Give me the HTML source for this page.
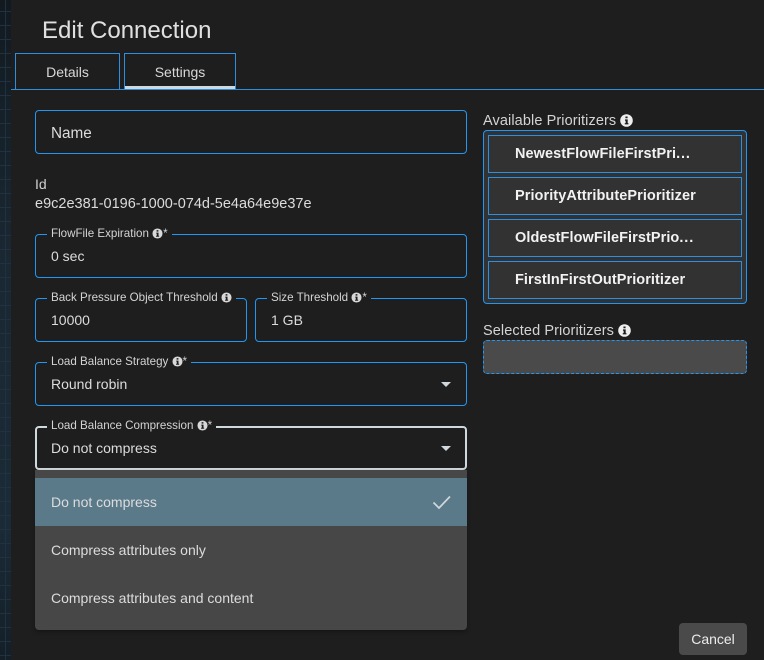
<!DOCTYPE html>
<html><head><meta charset="utf-8"><style>
*{box-sizing:border-box}
html,body{margin:0;padding:0;width:764px;height:660px;overflow:hidden;background:#1e1e1e}
body{font-family:"Liberation Sans",sans-serif;color:#dcdcdc;position:relative}
.a{position:absolute}
#strip{left:0;top:0;width:11px;height:660px;background-color:#18242e;
background-image:linear-gradient(#223140 1px,transparent 1px),linear-gradient(90deg,#223140 1px,transparent 1px),linear-gradient(#121a20,#1a2833 40%,#1a2a36 80%,#141f28);
background-size:14px 14px,14px 14px,100% 100%;background-position:0 11px,5px 0,0 0}
#panel{left:11px;top:0;width:753px;height:660px;background:#1e1e1e}
.title{left:42px;top:17px;font-size:24px;line-height:28px;color:#e0e0e0;white-space:nowrap}
.tab{top:53px;height:37px;border:1px solid #2d8fe0;border-bottom:0;font-size:14px;text-align:center;line-height:37px;color:#d8d8d8;background:#1e1e1e}
.ind{left:125px;top:86px;width:110px;height:3px;background:#cfd8dc}
.rule{left:11px;top:89px;width:753px;height:1px;background:#2d8fe0}
.f{border:1px solid #2196f3;border-radius:4px;height:44px;background:#1e1e1e}
.f.w{border:2px solid #cfd8dc}
.leg{position:absolute;left:11px;top:-8px;padding:0 4px;background:#1e1e1e;font-size:11.6px;line-height:14px;white-space:nowrap;color:#d4d4d4}
.w .leg{left:10px;top:-9px}
.val{font-size:14px;line-height:16px;color:#dcdcdc;white-space:nowrap}
.i{display:inline-block;vertical-align:-1.5px}
.lab{font-size:14.5px;line-height:16px;color:#d4d4d4;white-space:nowrap;left:483px;letter-spacing:.1px}
.item{left:488px;width:254px;height:38px;border:1px solid #2d8fe0;background:#323232;color:#f2f2f2;font-weight:bold;font-size:14.5px;line-height:36px;padding-left:26px;white-space:nowrap;letter-spacing:.07px}
.dots{letter-spacing:.9px}
.opt{left:35px;width:432px;height:48px;line-height:48px;padding-left:16px;font-size:14px;color:#dcdcdc}
</style></head><body>
<div class="a" id="strip"></div>
<div class="a" id="panel"></div>
<div class="a title">Edit Connection</div>
<div class="a tab" style="left:15px;width:105px">Details</div>
<div class="a tab" style="left:124px;width:112px">Settings</div>
<div class="a rule"></div>
<div class="a ind"></div>

<div class="a f" style="left:35px;top:110px;width:432px"></div>
<div class="a val" style="left:51px;top:126px;font-size:15.3px">Name</div>

<div class="a val" style="left:35px;top:176px;font-size:14px;color:#d0d0d0">Id</div>
<div class="a val" style="left:35px;top:196px;font-size:14.5px">e9c2e381-0196-1000-074d-5e4a64e9e37e</div>

<div class="a f" style="left:35px;top:234px;width:432px"><span class="leg">FlowFile Expiration <svg class="i" width="11" height="11" viewBox="0 0 12 12"><circle cx="6" cy="6" r="5.5" fill="#d8d8d8"/><path d="M5 2.3h2v1.6H5zM4.6 5h2.5v3.4h.7v1.2H4.4V8.4h.8V6.2h-.6z" fill="#1e1e1e"/></svg>*</span></div>
<div class="a val" style="left:51px;top:248px">0 sec</div>

<div class="a f" style="left:35px;top:298px;width:212px"><span class="leg">Back Pressure Object Threshold <svg class="i" width="11" height="11" viewBox="0 0 12 12"><circle cx="6" cy="6" r="5.5" fill="#d8d8d8"/><path d="M5 2.3h2v1.6H5zM4.6 5h2.5v3.4h.7v1.2H4.4V8.4h.8V6.2h-.6z" fill="#1e1e1e"/></svg></span></div>
<div class="a val" style="left:51px;top:312px">10000</div>

<div class="a f" style="left:255px;top:298px;width:212px"><span class="leg">Size Threshold <svg class="i" width="11" height="11" viewBox="0 0 12 12"><circle cx="6" cy="6" r="5.5" fill="#d8d8d8"/><path d="M5 2.3h2v1.6H5zM4.6 5h2.5v3.4h.7v1.2H4.4V8.4h.8V6.2h-.6z" fill="#1e1e1e"/></svg>*</span></div>
<div class="a val" style="left:271px;top:312px">1 GB</div>

<div class="a f" style="left:35px;top:362px;width:432px"><span class="leg">Load Balance Strategy <svg class="i" width="11" height="11" viewBox="0 0 12 12"><circle cx="6" cy="6" r="5.5" fill="#d8d8d8"/><path d="M5 2.3h2v1.6H5zM4.6 5h2.5v3.4h.7v1.2H4.4V8.4h.8V6.2h-.6z" fill="#1e1e1e"/></svg>*</span></div>
<div class="a val" style="left:51px;top:376px">Round robin</div>
<svg class="a" style="left:441px;top:382px" width="10" height="5" viewBox="0 0 10 5"><path d="M0 0h10L5 5z" fill="#cfd8dc"/></svg>

<div class="a f w" style="left:35px;top:426px;width:432px"><span class="leg">Load Balance Compression <svg class="i" width="11" height="11" viewBox="0 0 12 12"><circle cx="6" cy="6" r="5.5" fill="#d8d8d8"/><path d="M5 2.3h2v1.6H5zM4.6 5h2.5v3.4h.7v1.2H4.4V8.4h.8V6.2h-.6z" fill="#1e1e1e"/></svg>*</span></div>
<div class="a val" style="left:51px;top:440px">Do not compress</div>
<svg class="a" style="left:441px;top:446px" width="10" height="5" viewBox="0 0 10 5"><path d="M0 0h10L5 5z" fill="#cfd8dc"/></svg>

<div class="a" style="left:35px;top:470px;width:432px;height:160px;background:#474747;border-radius:0 0 4px 4px;box-shadow:0 2px 4px rgba(0,0,0,.3)"></div>
<div class="a opt" style="top:478px;background:#5a7a8a">Do not compress</div>
<svg class="a" style="left:432px;top:494px" width="20" height="16" viewBox="0 0 20 16"><path d="M1.5 8.5L7 14 18 2.5" fill="none" stroke="#cfd8dc" stroke-width="1.7"/></svg>
<div class="a opt" style="top:526px">Compress attributes only</div>
<div class="a opt" style="top:574px">Compress attributes and content</div>

<div class="a lab" style="top:113px">Available Prioritizers <svg class="i" width="13" height="13" viewBox="0 0 12 12"><circle cx="6" cy="6" r="5.8" fill="#eee"/><path d="M5 2.3h2v1.6H5zM4.6 5h2.5v3.4h.7v1.2H4.4V8.4h.8V6.2h-.6z" fill="#1e1e1e"/></svg></div>
<div class="a" style="left:483px;top:130px;width:264px;height:174px;border:1px solid #2196f3;border-radius:4px;background:#323232"></div>
<div class="a item" style="top:135px">NewestFlowFileFirstPri<span class="dots">...</span></div>
<div class="a item" style="top:177px">PriorityAttributePrioritizer</div>
<div class="a item" style="top:219px">OldestFlowFileFirstPrio<span class="dots">...</span></div>
<div class="a item" style="top:261px">FirstInFirstOutPrioritizer</div>

<div class="a lab" style="top:323px">Selected Prioritizers <svg class="i" width="13" height="13" viewBox="0 0 12 12"><circle cx="6" cy="6" r="5.8" fill="#eee"/><path d="M5 2.3h2v1.6H5zM4.6 5h2.5v3.4h.7v1.2H4.4V8.4h.8V6.2h-.6z" fill="#1e1e1e"/></svg></div>
<div class="a" style="left:483px;top:340px;width:264px;height:34px;border:1px dashed #2196f3;border-radius:4px;background:#4a4a4a"></div>

<div class="a" style="left:679px;top:623px;width:68px;height:32px;background:#4a4a4a;border-radius:4px;text-align:center;line-height:32px;font-size:14px;color:#ececec">Cancel</div>
</body></html>
